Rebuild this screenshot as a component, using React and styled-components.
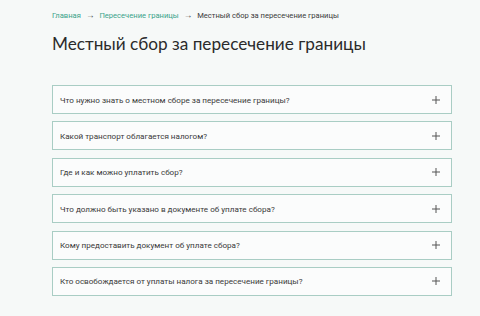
import React from "react";
import styled, { createGlobalStyle } from "styled-components";

const Global = createGlobalStyle`
  html, body { margin: 0; padding: 0; background: #f6f9f8; }
  body { font-family: Roboto, "Liberation Sans", sans-serif; }
`;

const Page = styled.div`
  width: 480px;
  height: 316px;
  box-sizing: border-box;
  padding: 9px 28px 0 52px;
  overflow: hidden;
`;

const Crumbs = styled.nav`
  display: flex;
  align-items: center;
  gap: 5px;
  height: 12px;
  font-size: 7.6px;
  color: #333;
`;

const CrumbLink = styled.span`
  color: ${(p) => (p.$active ? "#3a3a3a" : "#3aa38a")};
`;

const Arrow = styled.span`
  color: #555;
  font-size: 8.5px;
`;

const Title = styled.h1`
  margin: 10px 0 0;
  font-family: Lato, "Open Sans", sans-serif;
  font-weight: 400;
  font-size: 17.2px;
  line-height: 26px;
  color: #2b2b2b;
`;

const List = styled.div`
  display: flex;
  flex-direction: column;
  gap: 7.4px;
  margin-top: 28px;
  width: 400px;
`;

const Item = styled.div`
  box-sizing: border-box;
  height: 29px;
  display: flex;
  align-items: center;
  justify-content: space-between;
  padding: 0 11px 0 7px;
  background: #fbfcfc;
  border: 1px solid #a9cdc4;
  font-size: 8.1px;
  color: #3a3a3a;
`;

const Plus = styled.svg`
  width: 8px;
  height: 8px;
  flex: none;
`;

const questions = [
  "Что нужно знать о местном сборе за пересечение границы?",
  "Какой транспорт облагается налогом?",
  "Где и как можно уплатить сбор?",
  "Что должно быть указано в документе об уплате сбора?",
  "Кому предоставить документ об уплате сбора?",
  "Кто освобождается от уплаты налога за пересечение границы?",
];

export default function App() {
  return (
    <>
      <Global />
      <Page>
        <Crumbs>
          <CrumbLink>Главная</CrumbLink>
          <Arrow>→</Arrow>
          <CrumbLink>Пересечение границы</CrumbLink>
          <Arrow>→</Arrow>
          <CrumbLink $active>Местный сбор за пересечение границы</CrumbLink>
        </Crumbs>
        <Title>Местный сбор за пересечение границы</Title>
        <List>
          {questions.map((q) => (
            <Item key={q}>
              <span>{q}</span>
              <Plus viewBox="0 0 8 8">
                <path d="M4 0V8M0 4H8" stroke="#555" strokeWidth="1" />
              </Plus>
            </Item>
          ))}
        </List>
      </Page>
    </>
  );
}
